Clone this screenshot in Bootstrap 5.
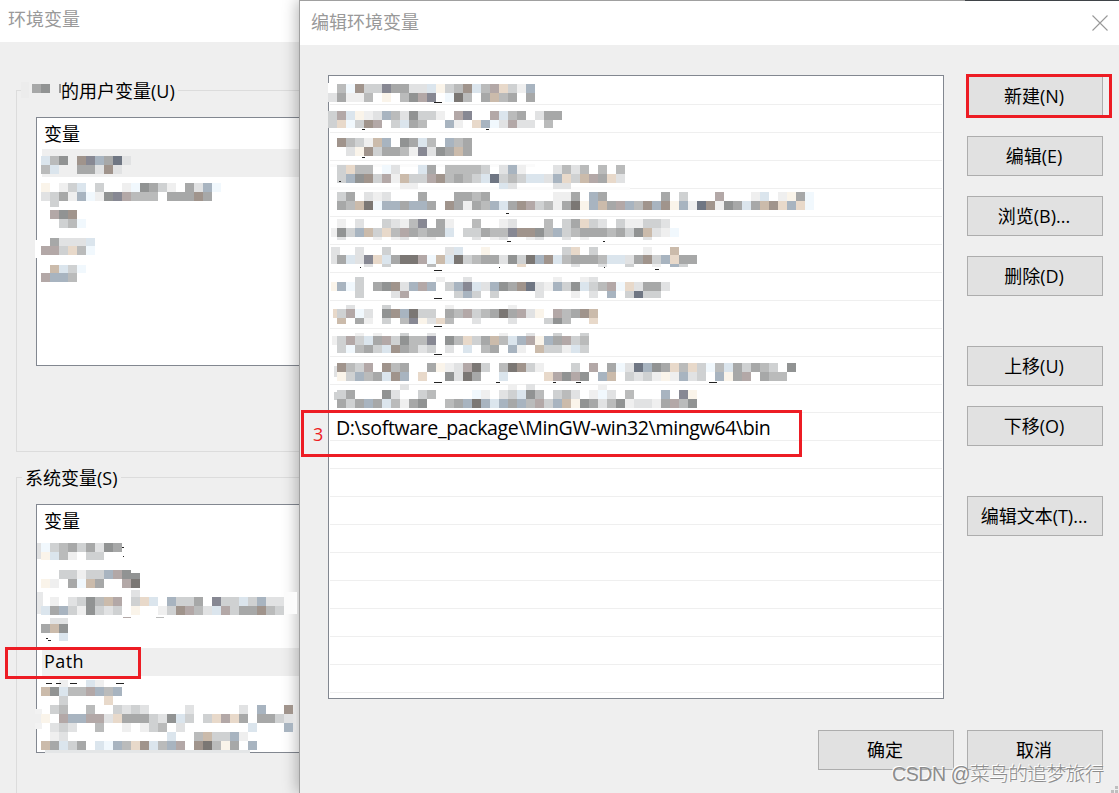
<!DOCTYPE html>
<html lang="zh-CN">
<head>
    <meta charset="UTF-8">
    <title>编辑环境变量</title>
    <link href="https://cdn.jsdelivr.net/npm/bootstrap@5.3.0/dist/css/bootstrap.min.css" rel="stylesheet">

    <style>
        body {
            width: 1119px;
            height: 793px;
            background: #efefef;
            color: #000;
            font-family: "Open Sans", "Noto Sans CJK SC", sans-serif;
            font-size: 18px;
            line-height: 28px;
        }
        .title-bar {
            background: #fff;
            color: #999;
        }
        .env-window {
            width: 299px;
            height: 793px;
        }
        .env-window .title-bar {
            height: 42px;
            padding: 5px 0 0 8px;
        }
        .var-group {
            height: 362px;
            margin-left: 16px;
            border: 1px solid #dcdcdc;
            border-right: 0;
        }
        .user-group {
            margin-top: 48px;
        }
        .system-group {
            height: 316px;
            margin-top: 25px;
            border-bottom: 0;
        }
        .group-label {
            width: fit-content;
            height: 28px;
            margin: -14px 0 0 5px;
            padding: 0 3px;
            background: #efefef;
        }
        .user-group .group-label {
            padding-left: 39px;
        }
        .var-list {
            height: 249px;
            margin: 12px 0 0 19px;
            padding: 3px 0 0 5px;
            background: #fff;
            border: 1px solid #828790;
            border-right: 0;
        }
        .var-row {
            height: 28px;
            padding-left: 2px;
            line-height: 27px;
        }
        .var-row.selected {
            background: #efefef;
        }
        .edit-dialog {
            background: #efefef;
            border-left: 1px solid #a0a0a0;
            border-top: 1px solid #a0a0a0;
            box-shadow: -2px 0 14px rgba(0,0,0,0.28);
        }
        .edit-dialog .title-bar {
            height: 44px;
            padding: 7px 11px 0 11px;
        }
        .close-icon {
            margin-top: 7px;
        }
        .dialog-main {
            padding: 30px 0 0 28px;
            gap: 23px;
        }
        .path-list {
            width: 616px;
            height: 624px;
            padding: 1px 1px 0;
            background: #fff;
            border: 1px solid #828790;
        }
        .path-row {
            height: 28px;
            padding-left: 6px;
            border-bottom: 1px solid #efefef;
            font-size: 19.6px;
            line-height: 29px;
            white-space: nowrap;
        }
        .side-buttons {
            gap: 20px;
            padding-top: 1px;
        }
        .dialog-footer {
            gap: 13px;
            padding: 31px 16px 0 0;
        }
        .win-btn {
            width: 136px;
            height: 40px;
            padding: 0 2px 0 0;
            background: #e1e1e1;
            border: 1px solid #adadad;
            border-radius: 0;
            color: #000;
            font-size: 18px;
            line-height: 38px;
        }
        .gap-before {
            margin-top: 30px;
        }
        .mark-box {
            border: 3px solid #ed1c24;
            color: #ed1c24;
        }
        .mark-new {
            left: 966px;
            top: 74px;
            width: 146px;
            height: 44px;
        }
        .mark-value {
            left: 301px;
            top: 410px;
            width: 501px;
            height: 47px;
            padding: 7px 0 0 9px;
        }
        .mark-path {
            left: 5px;
            top: 647px;
            width: 136px;
            height: 32px;
        }
        .watermark {
            left: 892px;
            bottom: 5px;
            color: #8c8c8c;
            font-family: "Liberation Sans", "Noto Sans CJK SC", sans-serif;
            font-size: 19.5px;
            font-weight: 300;
            white-space: nowrap;
            text-shadow: -1px -1px 0 #fff;
        }
        .strip-dark {
            left: 965px;
            width: 154px;
            height: 1px;
            background: #3f4348;
        }
    </style>
</head>
<body class="position-relative overflow-hidden d-flex">

<div class="env-window flex-shrink-0 d-flex flex-column overflow-hidden">
    <div class="title-bar">环境变量</div>
    <div class="var-group user-group">
        <div class="group-label">的用户变量(U)</div>
        <div class="var-list">
            <div class="var-row">变量</div>
            <div class="var-row selected"></div>
        </div>
    </div>
    <div class="var-group system-group">
        <div class="group-label">系统变量(S)</div>
        <div class="var-list">
            <div class="var-row">变量</div>
            <div class="var-row"></div>
            <div class="var-row"></div>
            <div class="var-row"></div>
            <div class="var-row"></div>
            <div class="var-row selected"><span id="pathName">Path</span></div>
        </div>
    </div>
</div>

<div class="edit-dialog flex-grow-1 position-relative">
    <div class="title-bar d-flex justify-content-between">
        <span>编辑环境变量</span>
        <svg class="close-icon" width="16" height="16" viewBox="0 0 16 16" stroke="#999" stroke-width="1.1"><path d="M.5.5l15 15M15.5.5l-15 15"/></svg>
    </div>
    <div class="dialog-main d-flex">
        <div class="path-list" id="pathList"></div>
        <div class="side-buttons d-flex flex-column">
            <button class="btn win-btn">新建(N)</button>
            <button class="btn win-btn">编辑(E)</button>
            <button class="btn win-btn">浏览(B)...</button>
            <button class="btn win-btn">删除(D)</button>
            <button class="btn win-btn gap-before">上移(U)</button>
            <button class="btn win-btn">下移(O)</button>
            <button class="btn win-btn gap-before">编辑文本(T)...</button>
        </div>
    </div>
    <div class="dialog-footer d-flex justify-content-end">
        <button class="btn win-btn">确定</button>
        <button class="btn win-btn">取消</button>
    </div>
</div>

<!-- pixelated private values -->
<svg id="mosaic" class="position-absolute top-0 start-0" width="1119" height="793" shape-rendering="crispEdges"></svg>

<!-- red callouts -->
<div class="mark-box mark-new position-absolute"></div>
<div class="mark-box mark-value position-absolute">3</div>
<div class="mark-box mark-path position-absolute"></div>

<div class="strip-dark position-absolute top-0"></div>
<div class="watermark position-absolute"><span id="wm">CSDN @菜鸟的追梦旅行</span></div>
<svg class="position-absolute bottom-0 end-0" width="8" height="8" fill="#bfbfbf"><path d="M4 1h3v3H4zM0 5h3v3H0zM4 5h3v3H4z"/></svg>

<script src="https://cdn.jsdelivr.net/npm/bootstrap@5.3.0/dist/js/bootstrap.bundle.min.js"></script>

<script>
    // 22 rows, only one of them readable
    const list = document.getElementById("pathList");
    for (let i = 0; i < 22; i++) {
        const row = document.createElement("div");
        row.className = "path-row";
        if (i === 12) {
            row.innerHTML = '<span id="pathValue">D:\\software_package\\MinGW-win32\\mingw64\\bin</span>';
        }
        list.appendChild(row);
    }

    // Spread letters so that a label takes a given width
    function fitWidth(id, width) {
        const el = document.getElementById(id);
        const extra = width - el.getBoundingClientRect().width;
        el.style.letterSpacing = (extra / el.textContent.length) + "px";
    }
    fitWidth("pathValue", 434.5);
    fitWidth("pathName", 40);
    fitWidth("wm", 212);

    const colors = {
        a: "#efefef", b: "#e1e2e3", c: "#cfd1d2", d: "#babbbb", e: "#a7a8a8",
        f: "#919393", g: "#7b7774", w: "#faf4ea", p: "#e8d9ca", t: "#cbbbab",
        n: "#a0948c", m: "#b3a8a7", s: "#dbe5ed", i: "#f1f8fd", u: "#a8b4c0",
        v: "#878893", k: "#6f7683"
    };

    // [x, y, height, cells], each cell is 9px wide
    const strips = [
        // dialog list
        [328, 84, 9, ".dinccveebbswcdnsdmpcau"],
        [328, 93, 9, "beaad.w.dfmv.igd.etde.e"],
        [328, 111, 9, "cmswabudbfcca.mv..msde.bee"],
        [328, 120, 8, "cpicnm.csed..ua.puibmbb.d"],
        [328, 138, 9, ".ndcatu.fesd.ude"],
        [328, 147, 9, "..bwnceedavbfete"],
        [328, 165, 9, ".cpdd.ib..se.ddddc.bua...bdbd.d.d"],
        [328, 174, 9, ".cufncmatccmndedcskcdcssbupctmepb"],
        [328, 183, 6, "........aa.........sb....bb"],
        [328, 192, 9, ".ce.bab...e...eede.......aae.ue......e.c...m...as.awei"],
        [328, 201, 9, ".edtgiuueuue.neaedusenmcdaegwutemudnunwuaknafesetnpupi"],
        [328, 219, 9, ".a.b..cbadv.ea..d..ab...d.cepcb.caaccb"],
        [331, 228, 9, "a"],
        [337, 228, 9, "fcutcpdmedees.cceddvnnfducdeeedecftbai"],
        [328, 237, 3, ".b...a.ab.aa....b.ab..ab..b.a......b"],
        [328, 247, 8, "...b..c......bs..w........cp.c.....a..t"],
        [331, 247, 17, "b"],
        [337, 255, 9, "esbvpseggmitsgcdeebfcgunsdeeedssbencupee"],
        [328, 264, 3, "....b.c....d.........p.....b..b..c..a.uc"],
        [331, 282, 9, "w"],
        [337, 282, 9, "uic.efnbumu.cuvsbufenkbaucfscdmipbeeb"],
        [328, 277, 5, "...c........a..b.........a..ab"],
        [328, 291, 7, "...c...bm.....cuc.c....b...a.b.u.ckcc"],
        [328, 305, 4, "..b...c......a......a"],
        [333, 309, 9, "p"],
        [337, 309, 9, "cmib.fnugcc.edmcdegembw.mdent"],
        [328, 318, 6, ".t.ea.c.dvwbpd..b...b...cfd..p"],
        [332, 336, 9, "a"],
        [337, 333, 3, "..a.a..c..b.......a..b..c..c"],
        [337, 336, 9, "cmcsemcfddv.fdpcetdsumwuemcd"],
        [328, 345, 8, ".cidecsnedbc.b.s.de.ua.tccasc"],
        [334, 366, 11, "b"],
        [328, 363, 9, ".ndcm.nde..ewabmgc.dgnca...c.m.eibkufepdpcidsecedc.f"],
        [328, 372, 9, ".wcudesnu.p..fbge..s....pmfmf.ut.cbcawaubc.uwem.edd"],
        [334, 392, 8, "c"],
        [328, 384, 6, "........b...........a.b.......a"],
        [328, 390, 9, ".ce...fb..cd....ia.bcsfd.cdb.aib.d...u.vw"],
        [328, 399, 9, ".eceuesdaef..deugusueudmcutwfebdfabbaemdf"],
        // user variables
        [32, 84, 9, "ef"],
        [32, 156, 9, ".sdf.nvuekb"],
        [32, 165, 9, ".ds..eebnb"],
        [32, 183, 9, ".w.acs.c..aifeca.ebui"],
        [32, 192, 9, ".bceauiafvmddd.eeene"],
        [50, 201, 6, "c"],
        [50, 210, 9, "mfn"],
        [50, 219, 9, ".cdi"],
        [50, 238, 8, "ebbbs"],
        [41, 246, 9, "mmcpdi"],
        [50, 265, 8, "tsci"],
        [41, 273, 9, "muud"],
        // system variables
        [32, 543, 9, ".icdecebfe"],
        [32, 552, 8, ".wsda.cc"],
        [32, 570, 9, "...ccaccumf"],
        [32, 579, 9, ".wa.eite..mg"],
        [131, 573, 6, "f"],
        [131, 590, 7, "b"],
        [32, 597, 9, "..a.bcfdtm.cps.ucce.vccscubb"],
        [32, 606, 9, ".seucafcbc.w..acnmdbsmceendc"],
        [50, 618, 6, "bb"],
        [41, 624, 9, "etf"],
        [59, 633, 8, "s"],
        [32, 680, 7, "...a..sa"],
        [32, 687, 9, ".tfsddmudu"],
        [32, 696, 9, "...c....p"],
        [32, 705, 9, "..cd..d..cbcb....b.....b.u..n"],
        [32, 714, 9, "aw.muummbpeeecbfsc.cpmpe.eecb"],
        [32, 723, 9, "..bcb..d..a.acd.b.......s...u"],
        [32, 732, 9, "..ab...........s..dtccua"],
        [32, 741, 9, ".tesce.siudpnsdum.ngdwe.u"]
    ];

    // White or grey smears left by the eraser, [x, y, w, h, colour]
    const smears = [
        [35, 240, 8, 18, "#fff"], [38, 265, 5, 19, "#fff"],
        [37, 543, 6, 16, "#e1e2e3"], [37, 592, 6, 22, "#e8e9ea"],
        [37, 620, 6, 16, "#fff"], [35, 709, 7, 20, "#f2f2f2"],
        [45, 750, 205, 3, "#e4e6e7"], [284, 592, 13, 22, "#fbfbfb"],
        [285, 712, 11, 18, "#e4e4e4"], [328, 83, 9, 10, "#fff"],
        [59, 84, 2, 9, "#999"], [21, 82, 8, 16, "#ececec"],
        [330, 164, 205, 3, "#fbfbfb"], [330, 187, 300, 3, "#fbfbfb"]
    ];

    // Strokes that were not covered
    const leftovers = [
        [434, 102, 8, 1], [434, 270, 8, 1], [434, 298, 8, 1], [434, 326, 8, 1],
        [434, 354, 8, 1], [434, 382, 8, 1], [709, 382, 8, 1],
        [362, 129, 3, 1], [486, 129, 3, 1], [362, 157, 3, 1], [339, 181, 2, 1],
        [506, 213, 3, 1], [507, 241, 4, 1], [603, 241, 2, 1], [655, 269, 4, 1],
        [360, 267, 1, 1], [499, 267, 1, 1], [604, 267, 1, 1],
        [496, 382, 4, 1], [553, 382, 3, 1], [576, 382, 5, 1],
        [122, 547, 2, 1], [123, 556, 1, 1], [46, 638, 2, 1], [48, 640, 3, 1],
        [46, 683, 6, 1], [56, 683, 5, 1], [70, 683, 7, 1], [116, 683, 8, 1]
    ];

    const mosaic = document.getElementById("mosaic");
    function addRect(x, y, w, h, fill) {
        const r = document.createElementNS("http://www.w3.org/2000/svg", "rect");
        r.setAttribute("x", x);
        r.setAttribute("y", y);
        r.setAttribute("width", w);
        r.setAttribute("height", h);
        r.setAttribute("fill", fill);
        mosaic.appendChild(r);
    }
    smears.forEach(s => addRect(...s));
    strips.forEach(([x, y, h, cells]) => {
        [...cells].forEach((c, i) => {
            if (colors[c]) addRect(x + i * 9, y, 9, h, colors[c]);
        });
    });
    leftovers.forEach(l => addRect(...l, "#222"));
    addRect(123, 617, 8, 1, "#b3a8a7");
    addRect(156, 617, 8, 1, "#babbbb");
</script>

</body>
</html>
